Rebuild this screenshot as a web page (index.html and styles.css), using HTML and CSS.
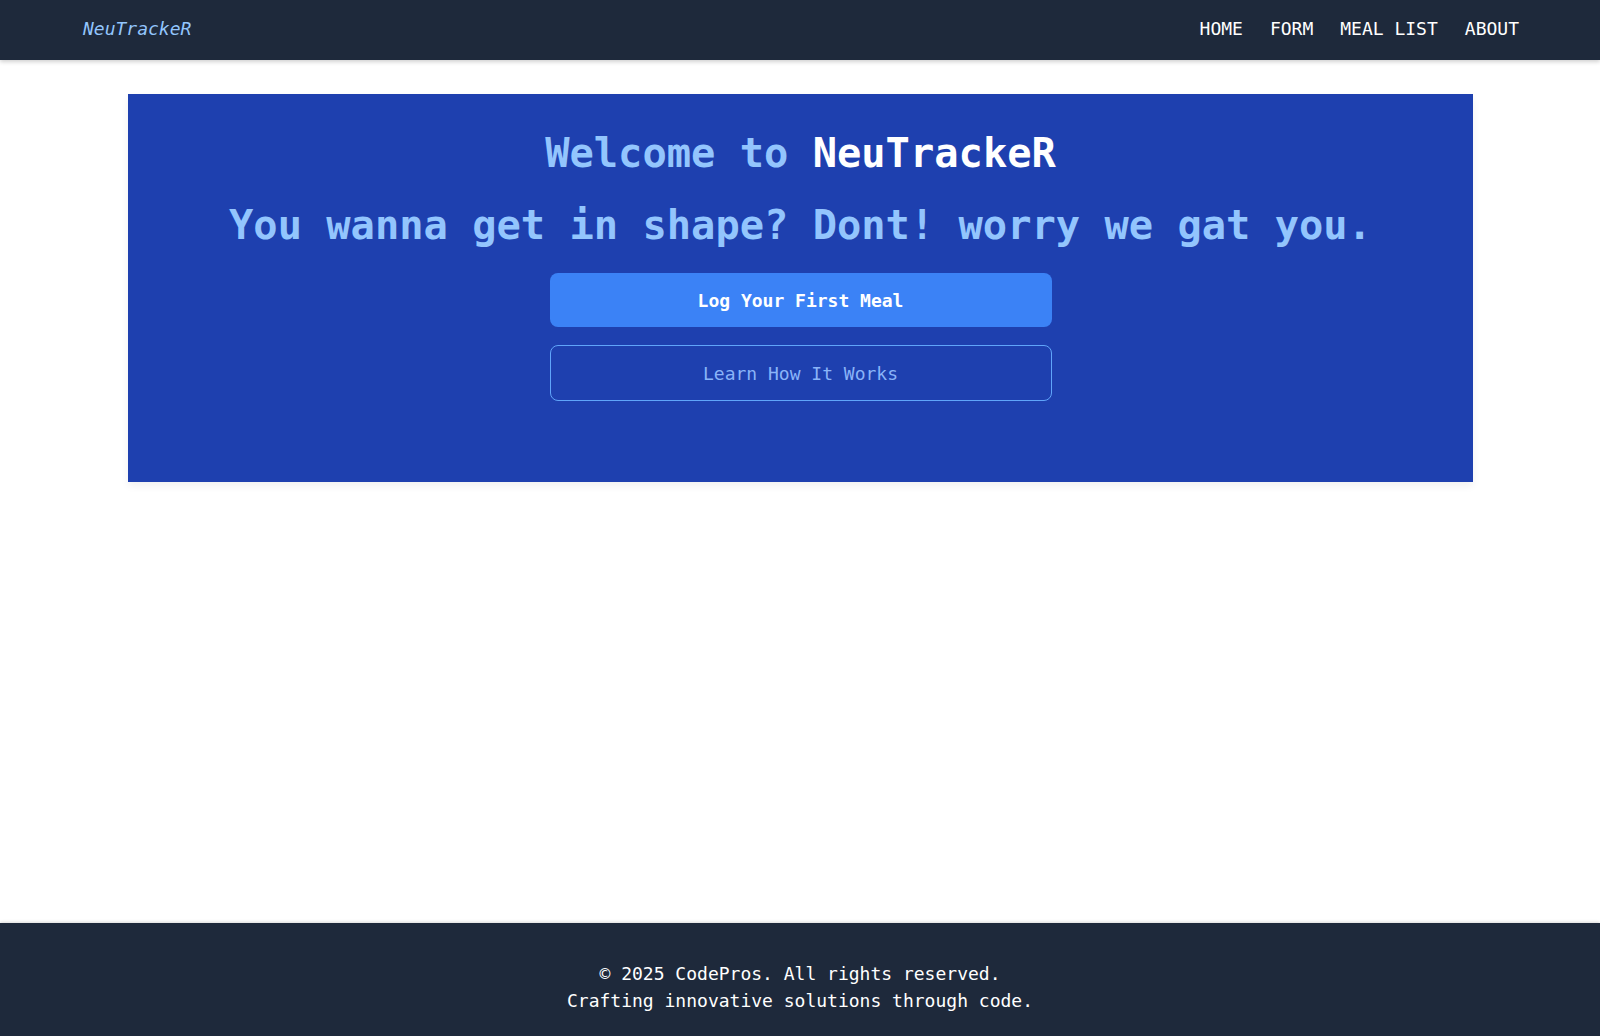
FILE: index.html
```html
<!DOCTYPE html>
<html lang="en">
<head>
<meta charset="utf-8">
<title>NeuTrackeR</title>
<link rel="stylesheet" href="styles.css">
</head>
<body>
<header class="topbar">
  <a class="logo" href="#">NeuTrackeR</a>
  <nav class="nav">
    <a href="#">HOME</a>
    <a href="#">FORM</a>
    <a href="#">MEAL LIST</a>
    <a href="#">ABOUT</a>
  </nav>
</header>
<main class="main">
  <section class="hero">
    <h1 class="hero-title">Welcome to <span class="brand">NeuTrackeR</span></h1>
    <h2 class="hero-sub">You wanna get in shape? Dont! worry we gat you.</h2>
    <div class="actions">
      <a class="btn btn-primary" href="#">Log Your First Meal</a>
      <a class="btn btn-outline" href="#">Learn How It Works</a>
    </div>
  </section>
</main>
<footer class="footer">
  <p>© 2025 CodePros. All rights reserved.</p>
  <p>Crafting innovative solutions through code.</p>
</footer>
</body>
</html>
```

FILE: styles.css
```css
* { box-sizing: border-box; }
html, body { margin: 0; padding: 0; }
body {
  font-family: "DejaVu Sans Mono", "Liberation Mono", monospace;
  background: #ffffff;
  min-height: 100vh;
  display: flex;
  flex-direction: column;
}
a { text-decoration: none; }

.topbar {
  height: 60px;
  background: #1e293b;
  display: flex;
  align-items: center;
  justify-content: space-between;
  padding: 0 81px 4px 83px;
  box-shadow: 0 2px 4px rgba(0,0,0,0.18);
  position: relative;
  z-index: 2;
}
.logo {
  font-size: 18px;
  font-style: italic;
  color: #93c5fd;
}
.nav {
  display: flex;
  gap: 27px;
}
.nav a {
  font-size: 18px;
  color: #ffffff;
}

.main {
  flex: 1;
  padding: 34px 127px 0 128px;
}
.hero {
  background: #1e40af;
  padding: 35px 0 80px;
  display: flex;
  flex-direction: column;
  align-items: center;
  box-shadow: 0 4px 8px rgba(0,0,0,0.06);
}
.hero-title, .hero-sub {
  margin: 0;
  font-size: 40.4px;
  line-height: 48px;
  font-weight: bold;
  color: #93c5fd;
  text-align: center;
}
.brand { color: #ffffff; }
.hero-sub { margin-top: 24px; }

.actions {
  margin-top: 24px;
  margin-bottom: 1px;
  display: flex;
  flex-direction: column;
  gap: 18px;
  width: 502px;
}
.btn {
  display: flex;
  align-items: center;
  justify-content: center;
  border-radius: 8px;
  font-size: 18px;
}
.btn-primary {
  height: 54px;
  background: #3b82f6;
  color: #ffffff;
  font-weight: bold;
}
.btn-outline {
  height: 56px;
  border: 1px solid #60a5fa;
  color: #8ab4f8;
}

.footer {
  background: #1e293b;
  color: #ffffff;
  text-align: center;
  padding: 37px 0 22px;
  font-size: 18px;
  line-height: 27px;
  box-shadow: 0 -1px 3px rgba(0,0,0,0.15);
}
.footer p { margin: 0; }
```
